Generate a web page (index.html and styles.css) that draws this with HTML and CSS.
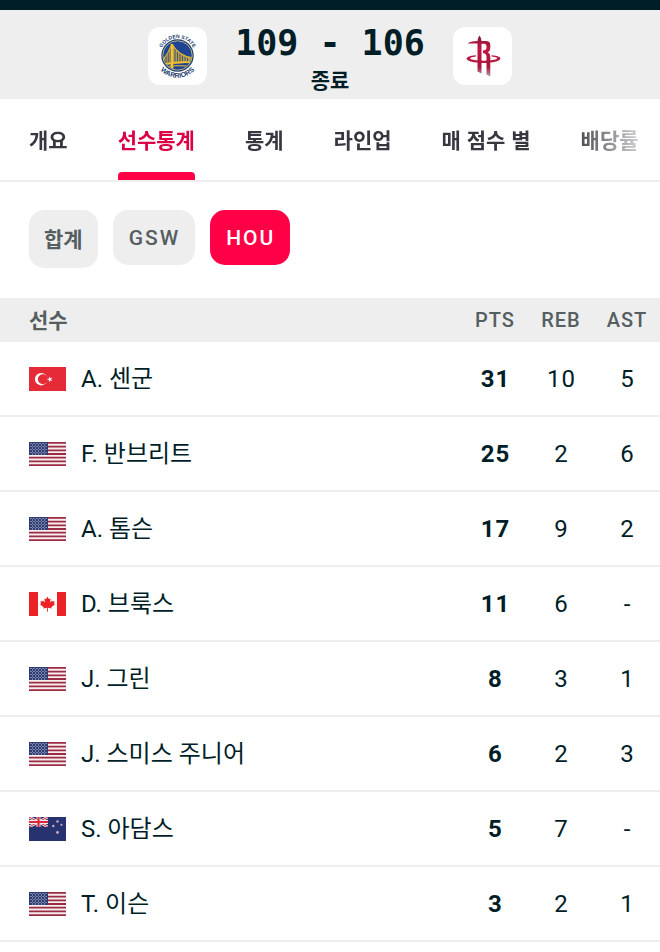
FILE: index.html
```html
<!DOCTYPE html>
<html lang="ko">
<head>
<meta charset="utf-8">
<meta name="viewport" content="width=device-width, initial-scale=1">
<title>GSW 109 - 106 HOU</title>
<link rel="stylesheet" href="styles.css">
</head>
<body>
<svg class="defs" aria-hidden="true">
  <symbol id="flag-us" viewBox="0 0 37 24">
    <rect width="37" height="24" fill="#f6eef0"/>
    <path stroke="#9c2c44" stroke-width="1.85" d="M0 .92h37M0 4.62h37M0 8.31h37M0 12h37M0 15.69h37M0 19.38h37M0 23.08h37"/>
    <rect width="19" height="13" fill="#303d72"/>
    <path stroke="#c3c9de" stroke-width="1" stroke-dasharray="1 2" d="M1.500 1.500h17M1.500 4.500h17M1.500 7.500h17M1.500 10.500h17"/>
    <path stroke="#c3c9de" stroke-width="1" stroke-dasharray="1 2" d="M3 3h15M3 6h15M3 9h15M3 12h15"/>
  </symbol>
  <symbol id="flag-tr" viewBox="0 0 37 24">
    <rect width="37" height="24" fill="#e42b37"/>
    <circle cx="12.200" cy="12.200" r="6.200" fill="#fff"/>
    <circle cx="13.900" cy="12.200" r="5" fill="#e42b37"/>
    <path fill="#fff" d="M18 12.300l2-.7V9.500l1.300 1.700 2-.7-1.200 1.800 1.200 1.700-2-.6-1.300 1.700V13z"/>
  </symbol>
  <symbol id="flag-ca" viewBox="0 0 37 24">
    <rect width="37" height="24" fill="#fff"/>
    <path fill="#eb2226" d="M0 0h9v24H0zM28 0h9v24h-9zM18.500 4.500l1.500 2.700 1.700-.8-.7 4 2.100-2 .5 1.200 2.200-.4-.8 2.300 1 .7-3.700 3 .4 1.200-3.800-.6.100 3.700h-1l.1-3.700-3.800.6.400-1.200-3.700-3 1-.7-.8-2.300 2.200.4.500-1.200 2.100 2-.7-4 1.700.8z"/>
  </symbol>
  <symbol id="flag-nz" viewBox="0 0 37 24">
    <rect width="37" height="24" fill="#26336f"/>
    <svg width="19" height="10" viewBox="0 0 19 10" preserveAspectRatio="none">
      <path stroke="#f3e9ee" stroke-width="2.600" d="M0 0l19 10M19 0L0 10"/>
      <path stroke="#d22b3d" stroke-width="1" d="M0 0l19 10M19 0L0 10"/>
      <path stroke="#f3e9ee" stroke-width="4" d="M9.500 0v10M0 5h19"/>
      <path stroke="#d9293b" stroke-width="2.200" d="M9.500 0v10M0 5h19"/>
    </svg>
    <g fill="#d9a6c0"><circle cx="28.500" cy="4.500" r="1.200"/><circle cx="24.300" cy="9" r="1.200"/><circle cx="32.500" cy="7.800" r="1.100"/><circle cx="28.500" cy="15.500" r="1.400"/></g>
  </symbol>
</svg>

<header class="scoreboard">
  <div class="team">
    <svg class="team-logo" viewBox="0 0 59 58" role="img" aria-label="Golden State Warriors">
      <defs>
        <path id="arc-top" d="M12.100 28.500a17.400 17.400 0 0 1 34.800 0"/>
        <path id="arc-bottom" d="M6.700 28a22.800 22.800 0 0 0 45.600 0"/>
        <clipPath id="disc"><circle cx="29.500" cy="28.500" r="14"/></clipPath>
      </defs>
      <circle cx="29.500" cy="28.500" r="16.200" fill="#24406f"/>
      <circle cx="29.500" cy="28.500" r="14.700" fill="#1f4494" stroke="#d8cf91" stroke-width=".8"/>
      <g clip-path="url(#disc)" fill="none">
        <path fill="#b49c4c" d="M14 34Q20 27 24 17Q31 29 45 31v4.500L14 38z"/>
        <path stroke="#29477f" stroke-width=".8" d="M18 26v10M20.300 23v13M22.300 20v16M27 22v13M29.500 25v10M32 27v8M34.500 29v6M37 30v5M39.500 31v4"/>
        <path stroke="#f5c02f" stroke-width="1" d="M14 34Q20 27 24 17Q31 29 45 31"/>
        <path stroke="#f5c02f" stroke-width="1.800" d="M13 38Q29 34 46 35.500"/>
        <path stroke="#f5c02f" stroke-width="2.600" d="M24 17v26"/>
        <path stroke="#f5c02f" stroke-width="1" d="M16 40.500q10-3 27-1"/>
      </g>
      <g class="logo-text">
        <text font-size="5"><textPath href="#arc-top" startOffset="50%" text-anchor="middle">GOLDEN STATE</textPath></text>
        <text font-size="7"><textPath href="#arc-bottom" startOffset="50%" text-anchor="middle">WARRIORS</textPath></text>
      </g>
    </svg>
  </div>
  <div class="result">
    <div class="score">109 - 106</div>
    <div class="status">종료</div>
  </div>
  <div class="team">
    <svg class="team-logo" viewBox="0 0 59 58" role="img" aria-label="Houston Rockets">
      <defs>
        <linearGradient id="trail" x1="0" y1="9" x2="0" y2="50" gradientUnits="userSpaceOnUse">
          <stop offset="0" stop-color="#861936"/><stop offset=".3" stop-color="#c21640"/><stop offset=".75" stop-color="#a9143b"/><stop offset="1" stop-color="#b0a0a6"/>
        </linearGradient>
      </defs>
      <path fill="#b51c43" fill-rule="evenodd" d="M23 28.200C9 29 10 35.500 30.500 36C51 35.500 52 29 38.500 28.200V29.600C48 30.500 46 33.500 30.500 33.800C15 33.500 14 30.500 23 29.600z"/>
      <path fill="url(#trail)" d="M26.500 8.500Q28.500 11 28.500 14h4.500q4.300 0 4.300 4v3q0 3-2.500 4.200Q37.300 26.500 37.300 30v19.500l-3.800-2V30q0-3.500-3.500-4v-2.500q3.500 0 3.500-3v-1.500q0-2.300-2.500-2.300h-2.500V46.500l-4-2V16.500H14.500Q17 14 24.500 14q0-3 2-5.500z"/>
    </svg>
  </div>
</header>

<nav class="tabs" aria-label="경기 메뉴">
  <div class="tabs-track">
    <a class="tab" href="#">개요</a>
    <a class="tab tab-active" href="#" aria-current="page">선수통계</a>
    <a class="tab" href="#">통계</a>
    <a class="tab" href="#">라인업</a>
    <a class="tab" href="#">매 점수 별</a>
    <a class="tab" href="#">배당률</a>
  </div>
</nav>

<main>
  <div class="filters">
    <button class="filter filter-total" type="button">합계</button>
    <button class="filter" type="button">GSW</button>
    <button class="filter filter-active" type="button" aria-pressed="true">HOU</button>
  </div>

  <table class="stats">
    <thead>
      <tr><th class="player-head" scope="col">선수</th><th class="stat" scope="col">PTS</th><th class="stat" scope="col">REB</th><th class="stat" scope="col">AST</th></tr>
    </thead>
    <tbody>
      <tr><th scope="row"><span class="player"><svg class="flag" aria-hidden="true"><use href="#flag-tr"/></svg>A. 센군</span></th><td class="points">31</td><td>10</td><td>5</td></tr>
      <tr><th scope="row"><span class="player"><svg class="flag" aria-hidden="true"><use href="#flag-us"/></svg>F. 반브리트</span></th><td class="points">25</td><td>2</td><td>6</td></tr>
      <tr><th scope="row"><span class="player"><svg class="flag" aria-hidden="true"><use href="#flag-us"/></svg>A. 톰슨</span></th><td class="points">17</td><td>9</td><td>2</td></tr>
      <tr><th scope="row"><span class="player"><svg class="flag" aria-hidden="true"><use href="#flag-ca"/></svg>D. 브룩스</span></th><td class="points">11</td><td>6</td><td>-</td></tr>
      <tr><th scope="row"><span class="player"><svg class="flag" aria-hidden="true"><use href="#flag-us"/></svg>J. 그린</span></th><td class="points">8</td><td>3</td><td>1</td></tr>
      <tr><th scope="row"><span class="player"><svg class="flag" aria-hidden="true"><use href="#flag-us"/></svg>J. 스미스 주니어</span></th><td class="points">6</td><td>2</td><td>3</td></tr>
      <tr><th scope="row"><span class="player"><svg class="flag" aria-hidden="true"><use href="#flag-nz"/></svg>S. 아담스</span></th><td class="points">5</td><td>7</td><td>-</td></tr>
      <tr><th scope="row"><span class="player"><svg class="flag" aria-hidden="true"><use href="#flag-us"/></svg>T. 이슨</span></th><td class="points">3</td><td>2</td><td>1</td></tr>
    </tbody>
  </table>
</main>
</body>
</html>
```
FILE: styles.css
```css
* {
  box-sizing: border-box;
}

body {
  margin: 0;
  background: #fff;
  color: #001e28;
  font-family: "Noto Sans CJK KR", sans-serif;
  font-size: 24px;
}

.defs {
  display: none;
}

.scoreboard {
  display: flex;
  justify-content: center;
  align-items: flex-start;
  gap: 28px;
  padding: 17px 0 5px;
  border-top: 10px solid #001e28;
  background: #eee;
}

.team {
  width: 59px;
  height: 58px;
  border-radius: 12px;
  background: #fff;
}

.team-logo {
  display: block;
  width: 100%;
  height: 100%;
}

.logo-text {
  fill: #24406f;
  font-family: "Liberation Sans", sans-serif;
  font-weight: 700;
}

.result {
  text-align: center;
}

.score {
  font-family: "DejaVu Sans Mono", monospace;
  font-size: 35px;
  font-weight: 700;
  line-height: 32px;
  white-space: pre;
}

.status {
  margin-top: 5px;
  font-size: 21px;
  font-weight: 700;
  line-height: 30px;
}

.tabs {
  border-bottom: 2px solid #eee;
  overflow: hidden;
}

.tabs-track {
  display: flex;
  gap: 50px;
  padding-left: 29px;
  -webkit-mask-image: linear-gradient(to left, transparent, #000 90px);
  mask-image: linear-gradient(to left, transparent, #000 90px);
}

.tab {
  flex: none;
  padding-top: 24px;
  color: #37373f;
  font-size: 21px;
  font-weight: 700;
  line-height: 32px;
  text-decoration: none;
}

.tab::after {
  content: "";
  display: block;
  height: 8px;
  margin-top: 17px;
  border-radius: 4px 4px 0 0;
}

.tab-active {
  color: #dc0045;
}

.tab-active::after {
  background: #ff0046;
}

.filters {
  display: flex;
  align-items: flex-start;
  gap: 15px;
  padding: 28px 29px 30px;
}

.filter {
  height: 55px;
  padding: 0 15px 0 16px;
  border: 0;
  border-radius: 15px;
  background: #eee;
  color: #555e61;
  font-family: Roboto, sans-serif;
  font-size: 21px;
  font-weight: 500;
  letter-spacing: 2px;
}

.filter-total {
  height: 58px;
  padding: 0 15px 2px;
  font-family: "Noto Sans CJK KR", sans-serif;
  font-weight: 700;
  letter-spacing: 0;
}

.filter-active {
  background: #ff0046;
  color: #fff;
}

.stats {
  width: 100%;
  table-layout: fixed;
  border-collapse: separate;
  border-spacing: 0;
}

.stats th,
.stats td {
  padding: 0;
  font-weight: 400;
}

.stats thead th {
  height: 44px;
  background: #eee;
  color: #555e61;
  font-size: 20px;
  line-height: 30px;
}

.stats thead .player-head {
  padding: 0 0 2px 29px;
  font-size: 21px;
  font-weight: 700;
  text-align: left;
}

.stats thead .stat {
  width: 66px;
  font-family: Roboto, sans-serif;
  font-weight: 500;
  letter-spacing: 1px;
}

.stats tbody th,
.stats tbody td {
  height: 75px;
  border-bottom: 2px solid #eee;
  font-family: Roboto, "Noto Sans CJK KR", sans-serif;
}

.stats td {
  padding-left: 1px;
  letter-spacing: 1px;
  text-align: center;
}

.stats .points {
  font-weight: 700;
}

.player {
  display: flex;
  align-items: center;
  gap: 15px;
  padding-left: 29px;
  line-height: 36px;
}

.flag {
  flex: none;
  width: 37px;
  height: 24px;
}
```
